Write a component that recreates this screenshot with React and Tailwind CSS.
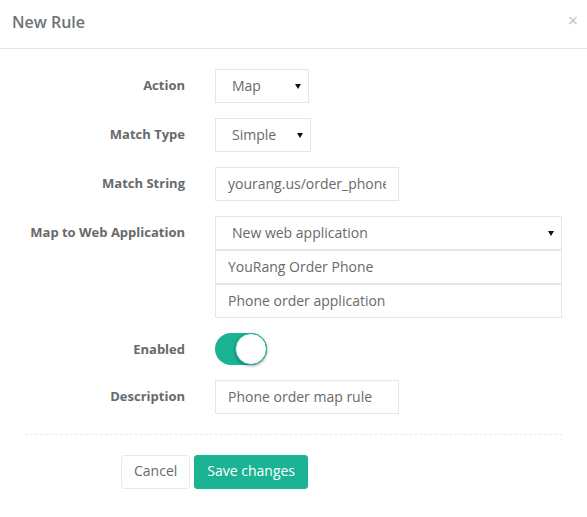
import React from "react";

const Arrow = () => (
  <svg width="6" height="6" viewBox="0 0 6 6" className="shrink-0">
    <polygon points="0,1 6,1 3,6" fill="#111" />
  </svg>
);

const SelectBox = ({ value, className = "" }) => (
  <div
    className={`h-[34px] border border-[#e5e6e7] bg-white flex items-center justify-between pl-[16px] pr-[7px] text-[14px] leading-[20px] ${className}`}
  >
    <span>{value}</span>
    <Arrow />
  </div>
);

// input-like box: text is clipped at the padding edge, like a real <input>
const TextBox = ({ value, className = "" }) => (
  <div
    className={`h-[34px] border border-[#e5e6e7] bg-white flex items-center px-[12px] text-[14px] leading-[20px] ${className}`}
  >
    <span className="block w-full overflow-hidden whitespace-nowrap">{value}</span>
  </div>
);

const Label = ({ children }) => (
  <div className="text-right text-[13px] font-bold leading-[18px] pt-[7px] text-[#676a6c]">
    {children}
  </div>
);

const Toggle = () => (
  <div className="relative w-[52px] h-[32px] rounded-full bg-[#1ab394]">
    <div className="absolute right-0 top-0 w-[32px] h-[32px] rounded-full bg-white border border-[#1ab394] shadow-[0_1px_3px_rgba(0,0,0,0.4)]" />
  </div>
);

export default function App() {
  return (
    <div className="w-[587px] h-[517px] bg-white font-['Open_Sans',sans-serif] text-[#676a6c]">
      <div className="h-[49px] border-b border-[#e5e5e5] flex items-center justify-between pl-[12px] pr-[9px]">
        <h4 className="text-[16px] font-semibold text-[#6f7275] -mt-[5px]">New Rule</h4>
        <span className="text-[18px] leading-none text-[#c4c4c4] -mt-[8px]">×</span>
      </div>

      <div className="px-[25px] pt-[20px]">
        <div className="grid grid-cols-[160px_1fr] gap-x-[30px] gap-y-[15px]">
          <Label>Action</Label>
          <SelectBox value="Map" className="w-[94px]" />

          <Label>Match Type</Label>
          <SelectBox value="Simple" className="w-[96px]" />

          <Label>Match String</Label>
          <TextBox value="yourang.us/order_phone" className="w-[184px]" />

          <Label>Map to Web Application</Label>
          <div className="flex flex-col">
            <SelectBox value="New web application" />
            <TextBox value="YouRang Order Phone" />
            <TextBox value="Phone order application" />
          </div>

          <Label>Enabled</Label>
          <div className="h-[32px]">
            <Toggle />
          </div>

          <Label>Description</Label>
          <TextBox value="Phone order map rule" className="w-[184px]" />
        </div>

        <div className="mt-[20px] border-t border-dashed border-[#e7eaec]" />

        <div className="mt-[20px] pl-[96px] flex gap-[4px]">
          <button className="h-[34px] px-[12px] rounded-[3px] border border-[#e7eaec] bg-white text-[14px] leading-[20px] pb-[2px] text-[#676a6c]">
            Cancel
          </button>
          <button className="h-[34px] px-[12px] rounded-[3px] border border-[#1ab394] bg-[#1ab394] text-[14px] leading-[20px] pb-[2px] text-white">
            Save changes
          </button>
        </div>
      </div>
    </div>
  );
}
